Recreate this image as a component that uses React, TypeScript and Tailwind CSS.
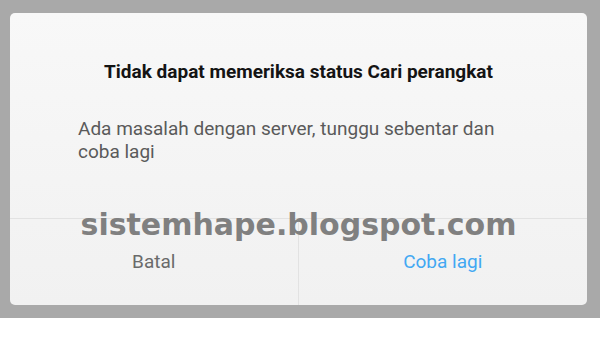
export default function App() {
  return (
    <div className="w-[600px] h-[351px] bg-white" style={{ fontFamily: "Roboto, 'Noto Sans', sans-serif" }}>
      <div className="bg-[#a9a9a9] pl-[10px] pr-[13px] pt-[13px] pb-[13px]">
        <div className="relative h-[292px] rounded-[5px] bg-gradient-to-b from-[#f8f8f8] to-[#f1f1f1] flex flex-col">
          <div className="h-[205px] flex flex-col">
            <div className="pt-[48px] text-center text-[19px] leading-[22px] font-bold text-[#141414]">
              Tidak dapat memeriksa status Cari perangkat
            </div>
            <div className="mt-[34px] px-[68px] text-[19px] leading-[23px] text-[#5a5a5a]">
              Ada masalah dengan server, tunggu sebentar dan coba lagi
            </div>
          </div>
          <div className="flex-1 grid grid-cols-2 border-t border-[#e2e2e2]">
            <div className="flex items-center justify-center text-[19px] text-[#6a6a6a] border-r border-[#e2e2e2]">
              Batal
            </div>
            <div className="flex items-center justify-center text-[19px] text-[#42a8f2]">
              Coba lagi
            </div>
          </div>
          <div
            className="absolute left-0 right-0 top-[195px] text-center text-[30px] leading-[34px] font-bold text-[#808080]"
            style={{ fontFamily: "'DejaVu Sans', sans-serif" }}
          >
            sistemhape.blogspot.com
          </div>
        </div>
      </div>
    </div>
  );
}
